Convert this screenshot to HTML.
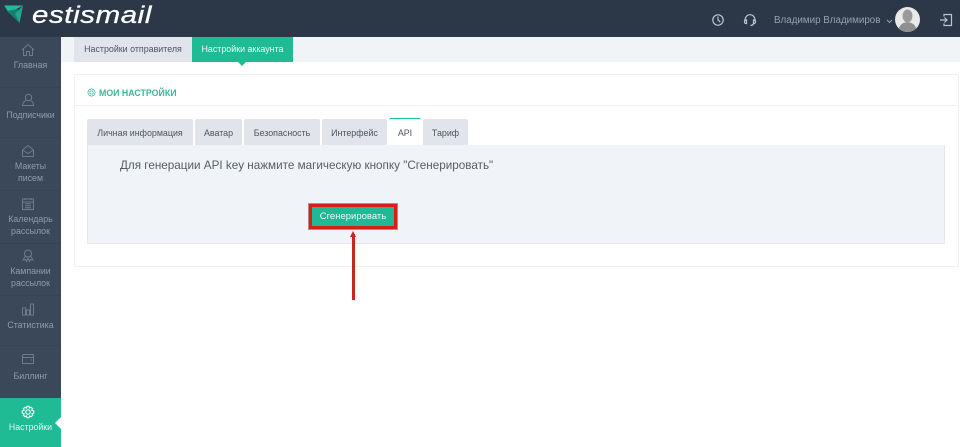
<!DOCTYPE html>
<html><head><meta charset="utf-8"><style>
*{box-sizing:border-box}
html,body{margin:0;padding:0}
body{width:960px;height:447px;overflow:hidden;position:relative;background:#fff;font-family:"Liberation Sans","Noto Sans CJK SC",sans-serif}
.a{position:absolute;white-space:nowrap}
.nav{position:absolute;left:0;width:61px;text-align:center;color:#8f9cab;font-size:8.8px;line-height:12px}
.nav svg{position:absolute;left:21px;top:0;width:14px;height:14px;fill:none;stroke:#6b7c90;stroke-width:1}
.nav span{position:absolute;left:0;width:61px}
.tab{position:absolute;top:119px;height:27px;background:#e1e5eb;color:#4a5560;font-size:8.9px;line-height:29px;text-align:center;border-radius:2px 2px 0 0}
.ic{position:absolute;fill:none;stroke:#bcc5cf;stroke-width:1.2}
</style></head><body>
<div class="a" style="left:0;top:0;width:960px;height:37px;background:#2c3848"></div>
<svg class="a" style="left:3px;top:4px" width="22" height="21" viewBox="0 0 22 21"><path d="M1 1.500L20 1.500L6 9Z" fill="#1fbd99"/><path d="M4 7L15 5L16.500 19Z" fill="#157f6c"/><path d="M20 1.500L16.500 19L12 10Z" fill="#1ea68a"/></svg>
<div class="a" style="left:32px;top:4px;color:#fff;font-size:24px;line-height:24px;font-style:italic;letter-spacing:.5px;-webkit-text-stroke:.3px #fff;transform-origin:left top;transform:scaleX(1.226)">estismail</div>

<svg class="ic" style="left:711px;top:13px" width="14" height="14" viewBox="0 0 14 14"><circle cx="7" cy="7" r="5.200"/><path d="M7 3.500V7L9.200 9"/></svg>
<svg class="ic" style="left:743px;top:13px" width="14" height="14" viewBox="0 0 14 14"><path d="M2.200 8V6.500a4.800 4.800 0 0 1 9.600 0V8M2 7h1.500v3.500H2.500Q1.500 10 1.500 8.500T2 7ZM12 7h-1.500v3.500h1Q12.500 10 12.500 8.500T12 7ZM10.500 11Q9.500 12.500 7.500 12.500"/></svg>
<div class="a" style="left:774px;top:14px;color:#93a0ae;font-size:9.8px;line-height:14px">Владимир Владимиров</div>
<svg class="a" style="left:886px;top:19px" width="7" height="5" viewBox="0 0 7 5"><path d="M1 1L3.500 3.500L6 1" fill="none" stroke="#93a0ae"/></svg>
<svg class="a" style="left:895px;top:7px" width="25" height="25" viewBox="0 0 25 25"><defs><clipPath id="c"><circle cx="12.500" cy="12.500" r="12.500"/></clipPath></defs><g clip-path="url(#c)"><rect width="25" height="25" fill="#e9e9e9"/><ellipse cx="12.500" cy="9" rx="5" ry="6.500" fill="#9a9a9a"/><path d="M3 25Q4 17 10 15.500H15Q21 17 22 25Z" fill="#8f8f8f"/></g></svg>
<svg class="ic" style="left:939px;top:13px" width="14" height="14" viewBox="0 0 14 14"><path d="M5 3.500V1.500H12.500V12.500H5V10.500M1 7H7.500M5.500 4.500L8 7L5.500 9.500"/></svg>

<div class="a" style="left:0;top:37px;width:61px;height:410px;background:#3a4859"></div>
<div class="a" style="left:0;top:87px;width:61px;height:1px;background:#364353"></div>
<div class="a" style="left:0;top:137px;width:61px;height:1px;background:#364353"></div>
<div class="a" style="left:0;top:190px;width:61px;height:1px;background:#364353"></div>
<div class="a" style="left:0;top:243px;width:61px;height:1px;background:#364353"></div>
<div class="a" style="left:0;top:295px;width:61px;height:1px;background:#364353"></div>
<div class="a" style="left:0;top:345px;width:61px;height:1px;background:#364353"></div>

<div class="nav" style="top:43px"><svg viewBox="0 0 14 14"><path d="M1 7L7 1.500L13 7M2.500 6V12.500H5.500V8.500H8.500V12.500H11.500V6"/></svg><span style="top:16px">Главная</span></div>
<div class="nav" style="top:93px"><svg viewBox="0 0 14 14"><circle cx="7.500" cy="4.500" r="3.200"/><path d="M5 7.500Q1.500 9 1.500 12.500H12.500Q12.500 9 10 7.500"/></svg><span style="top:16px">Подписчики</span></div>
<div class="nav" style="top:144px"><svg viewBox="0 0 14 14"><path d="M1.500 6L7 1.500L12.500 6V12.500H1.500ZM1.500 6L7 9.500L12.500 6"/></svg><span style="top:16px">Макеты<br>писем</span></div>
<div class="nav" style="top:197px"><svg viewBox="0 0 14 14"><rect x="1.500" y="2" width="11" height="10.500"/><path d="M1.500 5H12.500M4 6.800H10M4 8.800H10M4 10.700H10M4 1V3M10 1V3"/></svg><span style="top:16px">Календарь<br>рассылок</span></div>
<div class="nav" style="top:249px"><svg viewBox="0 0 14 14"><circle cx="7" cy="4.500" r="3.500"/><path d="M4.500 7L2 11L4.500 10.500L5.500 12.500L7 9L8.500 12.500L9.500 10.500L12 11L9.500 7"/></svg><span style="top:16px">Кампании<br>рассылок</span></div>
<div class="nav" style="top:302px"><svg viewBox="0 0 14 14"><rect x="1.500" y="6" width="3" height="7"/><rect x="5.500" y="8" width="3" height="5"/><rect x="9.500" y="2" width="3" height="11"/></svg><span style="top:17px">Статистика</span></div>
<div class="nav" style="top:351px"><svg viewBox="0 0 14 14"><path d="M1.500 4V12.500H12.500V3.500H3ZM1.500 6.500H12.500M10 9H11"/></svg><span style="top:19px">Биллинг</span></div>
<div class="a" style="left:0;top:398px;width:61px;height:49px;background:#1fbb95"></div>
<div class="a" style="left:55px;top:417px;width:0;height:0;border:6px solid transparent;border-left:0;border-right-color:#fff"></div>
<div class="nav" style="top:405px;color:#e4f6f1"><svg viewBox="0 0 14 14" style="stroke:#eafaf5;stroke-width:1.200"><circle cx="7" cy="7" r="2.200"/><path d="M6 1.300H8L8.400 3L10 2.200L11.500 3.600L10.800 5.200L12.700 6V8L11 8.500L11.700 10.200L10.200 11.700L8.600 11L8 12.700H6L5.500 11L3.900 11.700L2.400 10.200L3.100 8.500L1.300 8V6L3.100 5.300L2.400 3.700L3.900 2.300L5.500 3Z"/></svg><span style="top:16px">Настройки</span></div>

<div class="a" style="left:61px;top:37px;width:899px;height:25px;background:#f1f4f7"></div>
<div class="a" style="left:74px;top:37px;width:118px;height:25px;background:#e1e5eb;color:#4a5560;font-size:8.900px;line-height:25px;text-align:center">Настройки отправителя</div>
<div class="a" style="left:192px;top:37px;width:101px;height:25px;background:#1fbb95;color:#eafaf5;font-size:8.900px;line-height:25px;text-align:center">Настройки аккаунта</div>
<div class="a" style="left:238px;top:62px;width:0;height:0;border:4px solid transparent;border-bottom:0;border-top-color:#1fbb95"></div>

<div class="a" style="left:74px;top:74px;width:885px;height:193px;background:#fff;border:1px solid #eef0f3;border-radius:2px"></div>
<div class="a" style="left:75px;top:105px;width:883px;height:1px;background:#eef0f3"></div>
<svg class="a" style="left:87px;top:88px;fill:none;stroke:#3ab79b;stroke-width:1" width="9" height="9" viewBox="0 0 14 14"><circle cx="7" cy="7" r="2.500"/><path d="M6 1.300H8L8.400 3L10 2.200L11.500 3.600L10.800 5.200L12.700 6V8L11 8.500L11.700 10.200L10.200 11.700L8.600 11L8 12.700H6L5.500 11L3.900 11.700L2.400 10.200L3.100 8.500L1.300 8V6L3.100 5.300L2.400 3.700L3.900 2.300L5.500 3Z"/></svg>
<div class="a" style="left:99px;top:87px;color:#3ab79b;font-size:8.800px;line-height:12px;font-weight:bold">МОИ НАСТРОЙКИ</div>

<div class="tab" style="left:87px;width:106px">Личная информация</div>
<div class="tab" style="left:195px;width:47px">Аватар</div>
<div class="tab" style="left:244px;width:76px">Безопасность</div>
<div class="tab" style="left:322px;width:65px">Интерфейс</div>
<div class="tab" style="left:389px;width:32px;background:#fff;border-top:1px solid #1fbb95;line-height:28px;top:118px;height:28px">API</div>
<div class="tab" style="left:423px;width:45px">Тариф</div>
<div class="a" style="left:87px;top:145px;width:858px;height:99px;background:#f0f3f7;border:1px solid #e3e7ec;border-top:0"></div>
<div class="a" style="left:120px;top:158px;color:#555e68;font-size:11.700px;line-height:16px">Для генерации API key нажмите магическую кнопку "Сгенерировать"</div>

<div class="a" style="left:309px;top:204px;width:88px;height:25px;background:#1fb995;border:3px solid #d71f1a;box-shadow:0 0 0 1px #b98c80;color:#eafaf5;font-size:9.500px;line-height:20px;text-align:center">Сгенерировать</div>
<div class="a" style="left:352px;top:234px;width:3px;height:66px;background:#c8261f"></div>
<div class="a" style="left:350px;top:231px;width:0;height:0;border:3.500px solid transparent;border-top:0;border-bottom:6px solid #c8261f"></div>
</body></html>
